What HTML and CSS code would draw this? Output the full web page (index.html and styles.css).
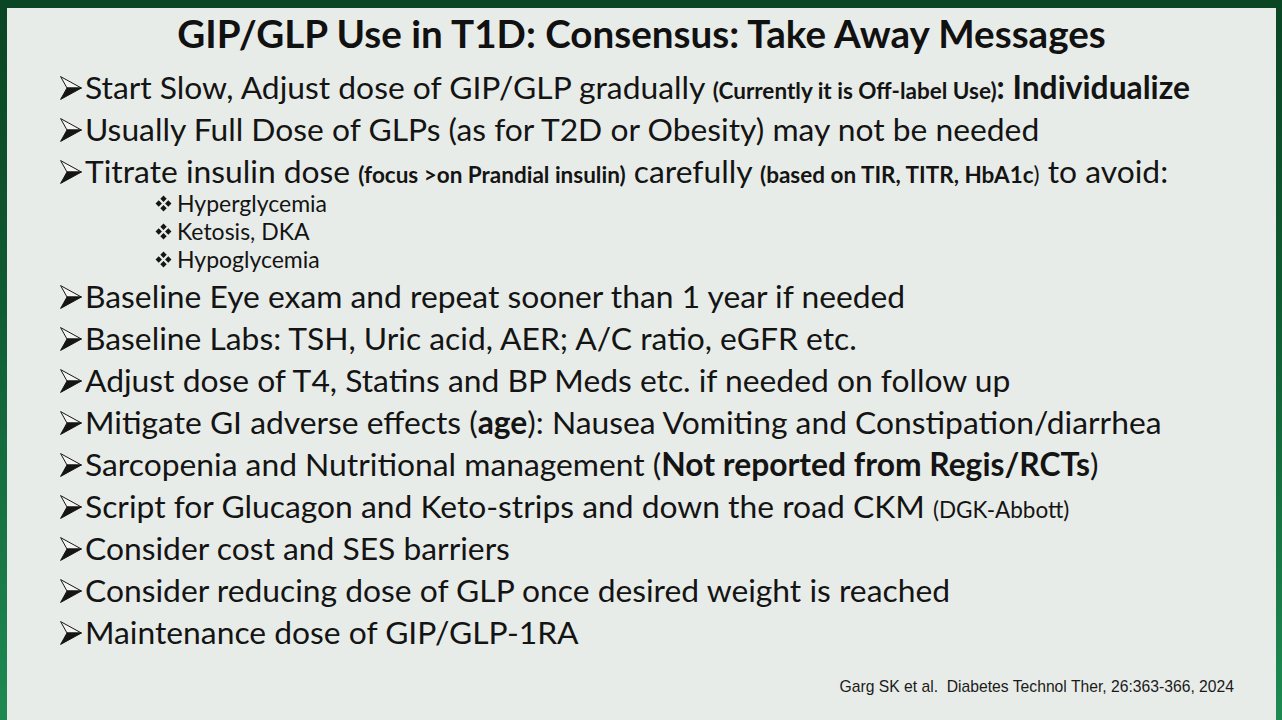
FILE: index.html
```html
<!DOCTYPE html>
<html lang="en">
<head>
<meta charset="utf-8">
<title>GIP/GLP Use in T1D: Consensus: Take Away Messages</title>
<link rel="stylesheet" href="styles.css">
</head>
<body>
<div class="frame">
  <div class="slide">
    <h1 class="title">GIP/GLP Use in T1D: Consensus: Take Away Messages</h1>
    <ul class="points">
      <li class="pt"><svg class="arrow" viewBox="0 0 22 24"><polygon class="a-top" points="0.6,0.6 21.4,12 7,12"/><polygon class="a-bot" points="7,12 21.4,12 0.6,23.4"/></svg><span>Start Slow, Adjust dose of GIP/GLP gradually <b class="sm">(Currently it is Off-label Use)</b><b>: Individualize</b></span></li>
      <li class="pt"><svg class="arrow" viewBox="0 0 22 24"><polygon class="a-top" points="0.6,0.6 21.4,12 7,12"/><polygon class="a-bot" points="7,12 21.4,12 0.6,23.4"/></svg><span>Usually Full Dose of GLPs (as for T2D or Obesity) may not be needed</span></li>
      <li class="pt"><svg class="arrow" viewBox="0 0 22 24"><polygon class="a-top" points="0.6,0.6 21.4,12 7,12"/><polygon class="a-bot" points="7,12 21.4,12 0.6,23.4"/></svg><span>Titrate insulin dose <b class="sm">(focus &gt;on Prandial insulin)</b> carefully <b class="sm">(based on TIR, TITR, HbA1c</b><span class="sm">)</span> to avoid:</span></li>
      <li class="sub">
        <ul class="subs">
          <li><svg class="dia" viewBox="0 0 16 16"><path d="M8 0.5 11 3.5 8 6.5 5 3.5Z M8 9.5 11 12.5 8 15.5 5 12.5Z M3.5 5 6.5 8 3.5 11 0.5 8Z M12.5 5 15.5 8 12.5 11 9.5 8Z"/></svg><span>Hyperglycemia</span></li>
          <li><svg class="dia" viewBox="0 0 16 16"><path d="M8 0.5 11 3.5 8 6.5 5 3.5Z M8 9.5 11 12.5 8 15.5 5 12.5Z M3.5 5 6.5 8 3.5 11 0.5 8Z M12.5 5 15.5 8 12.5 11 9.5 8Z"/></svg><span>Ketosis, DKA</span></li>
          <li><svg class="dia" viewBox="0 0 16 16"><path d="M8 0.5 11 3.5 8 6.5 5 3.5Z M8 9.5 11 12.5 8 15.5 5 12.5Z M3.5 5 6.5 8 3.5 11 0.5 8Z M12.5 5 15.5 8 12.5 11 9.5 8Z"/></svg><span>Hypoglycemia</span></li>
        </ul>
      </li>
      <li class="pt"><svg class="arrow" viewBox="0 0 22 24"><polygon class="a-top" points="0.6,0.6 21.4,12 7,12"/><polygon class="a-bot" points="7,12 21.4,12 0.6,23.4"/></svg><span>Baseline Eye exam and repeat sooner than 1 year if needed</span></li>
      <li class="pt"><svg class="arrow" viewBox="0 0 22 24"><polygon class="a-top" points="0.6,0.6 21.4,12 7,12"/><polygon class="a-bot" points="7,12 21.4,12 0.6,23.4"/></svg><span>Baseline Labs: TSH, Uric acid, AER; A/C ratio, eGFR etc.</span></li>
      <li class="pt"><svg class="arrow" viewBox="0 0 22 24"><polygon class="a-top" points="0.6,0.6 21.4,12 7,12"/><polygon class="a-bot" points="7,12 21.4,12 0.6,23.4"/></svg><span>Adjust dose of T4, Statins and BP Meds etc. if needed on follow up</span></li>
      <li class="pt"><svg class="arrow" viewBox="0 0 22 24"><polygon class="a-top" points="0.6,0.6 21.4,12 7,12"/><polygon class="a-bot" points="7,12 21.4,12 0.6,23.4"/></svg><span>Mitigate GI adverse effects (<b>age</b>): Nausea Vomiting and Constipation/diarrhea</span></li>
      <li class="pt"><svg class="arrow" viewBox="0 0 22 24"><polygon class="a-top" points="0.6,0.6 21.4,12 7,12"/><polygon class="a-bot" points="7,12 21.4,12 0.6,23.4"/></svg><span>Sarcopenia and Nutritional management (<b>Not reported from Regis/RCTs</b>)</span></li>
      <li class="pt"><svg class="arrow" viewBox="0 0 22 24"><polygon class="a-top" points="0.6,0.6 21.4,12 7,12"/><polygon class="a-bot" points="7,12 21.4,12 0.6,23.4"/></svg><span>Script for Glucagon and Keto-strips and down the road CKM <span class="sm">(DGK-Abbott)</span></span></li>
      <li class="pt"><svg class="arrow" viewBox="0 0 22 24"><polygon class="a-top" points="0.6,0.6 21.4,12 7,12"/><polygon class="a-bot" points="7,12 21.4,12 0.6,23.4"/></svg><span>Consider cost and SES barriers</span></li>
      <li class="pt"><svg class="arrow" viewBox="0 0 22 24"><polygon class="a-top" points="0.6,0.6 21.4,12 7,12"/><polygon class="a-bot" points="7,12 21.4,12 0.6,23.4"/></svg><span>Consider reducing dose of GLP once desired weight is reached</span></li>
      <li class="pt"><svg class="arrow" viewBox="0 0 22 24"><polygon class="a-top" points="0.6,0.6 21.4,12 7,12"/><polygon class="a-bot" points="7,12 21.4,12 0.6,23.4"/></svg><span>Maintenance dose of GIP/GLP-1RA</span></li>
    </ul>
    <p class="ref">Garg SK et al.&nbsp; Diabetes Technol Ther, 26:363-366, 2024</p>
  </div>
</div>
</body>
</html>
```
FILE: styles.css
```css
html, body {
  margin: 0;
  padding: 0;
}
body {
  width: 1282px;
  height: 720px;
  overflow: hidden;
  font-family: "Lato", "Open Sans", sans-serif;
  color: #141414;
}
.frame {
  box-sizing: border-box;
  width: 1282px;
  height: 720px;
  padding: 8px 6px 0 7px;
  background: linear-gradient(to bottom, #0a4524 0%, #0f5a31 40%, #1e8a52 100%);
}
.slide {
  box-sizing: border-box;
  height: 100%;
  background: #e8ece8;
  display: flex;
  flex-direction: column;
  padding: 0 0 0 53px;
}
.title {
  margin: 3px 0 0 -53px;
  text-align: center;
  font-weight: 700;
  font-size: 38.6px;
  line-height: 44px;
  color: #111;
}
.points {
  list-style: none;
  margin: 11px 0 0 0;
  padding: 0;
}
.pt {
  display: flex;
  align-items: center;
  gap: 3px;
  font-size: 31.8px;
  line-height: 42px;
  height: 42px;
  white-space: nowrap;
}
.pt b {
  font-weight: 700;
  line-height: 1;
}
.pt .sm {
  font-size: 22.5px;
  line-height: 1;
}
.arrow {
  width: 22px;
  height: 24px;
  flex: none;
  margin-top: 2px;
}
.a-top {
  fill: #f4f4f4;
  stroke: #151515;
  stroke-width: 1;
  stroke-linejoin: round;
}
.a-bot {
  fill: #151515;
  stroke: #151515;
  stroke-width: 1;
  stroke-linejoin: round;
}
.sub {
  margin-top: -3px;
  padding: 0 0 2px 0;
}
.subs {
  list-style: none;
  margin: 0;
  padding: 0 0 0 95px;
}
.subs li {
  display: flex;
  align-items: center;
  gap: 5px;
  font-size: 23px;
  line-height: 28px;
}
.dia {
  width: 17px;
  height: 17px;
  fill: #151515;
  flex: none;
}
.ref {
  margin: auto 42px 24px auto;
  font-family: "Liberation Sans", Arial, sans-serif;
  font-size: 15.7px;
  color: #1a1a1a;
}
```
